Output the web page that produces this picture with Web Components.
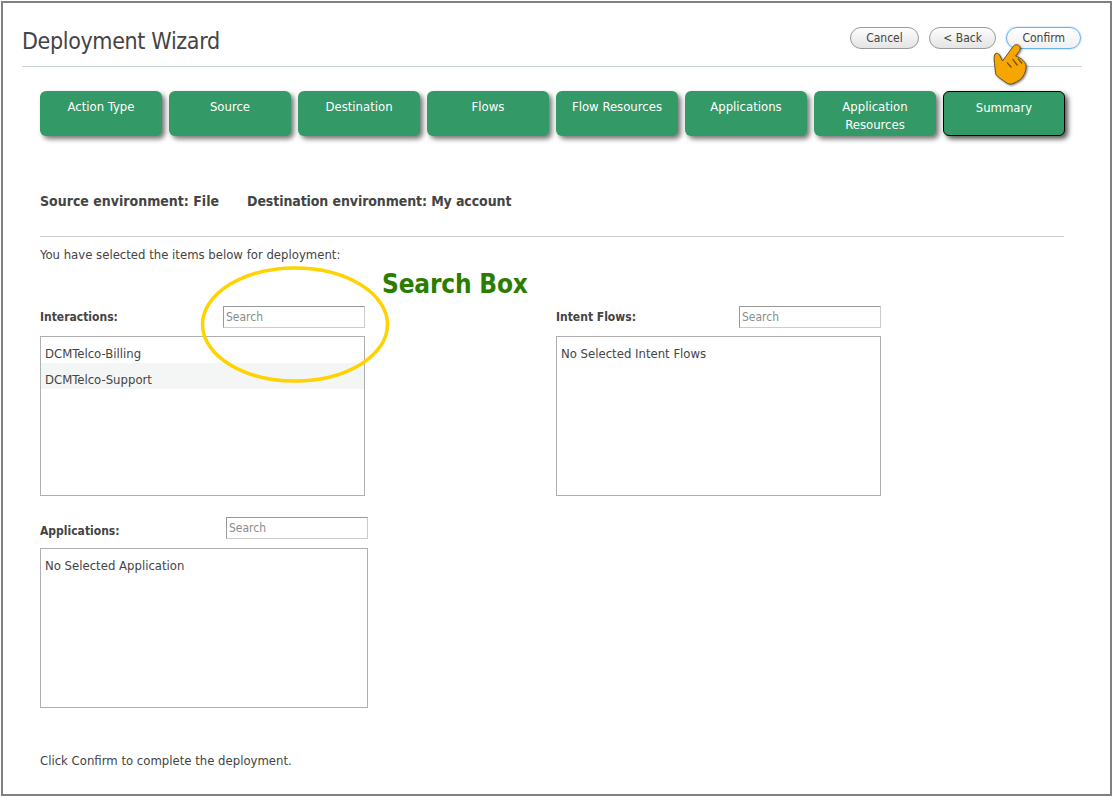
<!DOCTYPE html>
<html>
<head>
<meta charset="utf-8">
<title>Deployment Wizard</title>
<style>
  html, body { margin: 0; padding: 0; background: #fff; }
  body { font-family: "DejaVu Sans Condensed", "DejaVu Sans", sans-serif; }
</style>
</head>
<body>
<wizard-page>
  <wizard-header slot="header" title-text="Deployment Wizard">
    <wizard-button>Cancel</wizard-button>
    <wizard-button style="padding: 0 13.5px">&lt; Back</wizard-button>
    <wizard-button focused>Confirm</wizard-button>
  </wizard-header>
  <wizard-tabs slot="tabs">
    <wizard-tab>Action Type</wizard-tab>
    <wizard-tab>Source</wizard-tab>
    <wizard-tab>Destination</wizard-tab>
    <wizard-tab>Flows</wizard-tab>
    <wizard-tab>Flow Resources</wizard-tab>
    <wizard-tab>Applications</wizard-tab>
    <wizard-tab>Application Resources</wizard-tab>
    <wizard-tab active>Summary</wizard-tab>
  </wizard-tabs>
  <selection-panel slot="interactions" label="Interactions:">
    <list-row>DCMTelco-Billing</list-row>
    <list-row alt>DCMTelco-Support</list-row>
  </selection-panel>
  <selection-panel slot="intents" label="Intent Flows:">
    <list-row>No Selected Intent Flows</list-row>
  </selection-panel>
  <selection-panel slot="applications" label="Applications:" wide>
    <list-row>No Selected Application</list-row>
  </selection-panel>
</wizard-page>

<script>
const pageTemplate = document.createElement('template');
pageTemplate.innerHTML = `
<style>
  * { box-sizing: border-box; }
  :host {
    display: block;
    box-sizing: border-box;
    position: relative;
    width: 1111px;
    height: 795px;
    margin: 1px;
    padding: 0 28px 0 19px;
    border: 2px solid #808080;
    color: #444;
    font-size: 13px;
    overflow: hidden;
  }
  .body { padding: 0 18px; }
  .envs {
    display: flex;
    gap: 28px;
    margin-top: 57px;
    padding-bottom: 26px;
    border-bottom: 1px solid #ccc;
    font-size: 14px;
    font-weight: bold;
    line-height: 17px;
    width: 1024px;
  }
  .envs span + span { letter-spacing: -0.1px; }
  .intro { margin: 10px 0 0; line-height: 16px; }
  .grid {
    display: grid;
    grid-template-columns: 516px 325px;
    margin-top: 43px;
  }
  .apps { margin-top: 21px; }
  .foot { margin: 45px 0 0; line-height: 16px; }
  .callout {
    position: absolute;
    left: 379px;
    top: 263px;
    font-size: 26px;
    font-weight: bold;
    line-height: 36px;
    letter-spacing: -0.2px;
    color: #2b7d00;
    white-space: nowrap;
  }
  .ellipse { position: absolute; left: 197px; top: 262px; }
  .hand {
    position: absolute;
    left: 982px;
    top: 37px;
    filter: drop-shadow(1px 1px 1px rgba(0, 0, 0, .5));
  }
</style>
<slot name="header"></slot>
<slot name="tabs"></slot>
<div class="body">
  <div class="envs"><span>Source environment: File</span><span>Destination environment: My account</span></div>
  <p class="intro">You have selected the items below for deployment:</p>
  <div class="grid">
    <slot name="interactions"></slot>
    <slot name="intents"></slot>
  </div>
  <div class="apps"><slot name="applications"></slot></div>
  <p class="foot">Click Confirm to complete the deployment.</p>
</div>
<svg class="ellipse" width="192" height="122" viewBox="0 0 192 122">
  <ellipse cx="95" cy="59.500" rx="92.500" ry="56.500" fill="none" stroke="#ffd200" stroke-width="3.500"/>
</svg>
<div class="callout">Search Box</div>
<svg class="hand" width="46" height="52" viewBox="985 40 46 52">
  <path d="M1013.500 46c2-2.200 5.500-1.500 6.500 1 .5 1.500 0 3-1 4.500l-3.500 4.500c3 .8 5.500 2.500 7.500 4.500 2.500 2.500 3.500 5 3 7.500-.5 4-2 7.500-4.500 10.500-3 2.500-6.500 4.500-10 5.500-2 .3-4-.3-5.500-1.500-3-2.500-7.500-4.500-10-8-.8-3-1-7-1.500-11-.3-3-.8-7 .5-9.500 1.500-1.500 3.500-.5 4.500 1l3 6z" fill="#f7a600" stroke="#5f5230" stroke-width="1"/>
  <path d="M1007 62.500l4.500 5M1012.500 59l5 6.500M1018 58.500l4 5" fill="none" stroke="#7a5200" stroke-width="1.300"/>
</svg>
`;
class WizardPage extends HTMLElement {
  constructor() {
    super();
    this.attachShadow({ mode: 'open' }).appendChild(pageTemplate.content.cloneNode(true));
  }
}
customElements.define('wizard-page', WizardPage);

const headerTemplate = document.createElement('template');
headerTemplate.innerHTML = `
<style>
  * { box-sizing: border-box; }
  :host {
    display: flex;
    align-items: flex-start;
    justify-content: space-between;
    height: 64px;
    padding-top: 24px;
    border-bottom: 1px solid #ccd3d3;
    box-sizing: border-box;
  }
  h1 {
    margin: -1px 0 0;
    font-size: 23px;
    font-weight: normal;
    line-height: 30px;
    letter-spacing: -0.35px;
    color: #444;
  }
  .actions { display: flex; gap: 10px; padding-right: 1px; }
</style>
<h1></h1>
<div class="actions"><slot></slot></div>
`;
class WizardHeader extends HTMLElement {
  constructor() {
    super();
    this.attachShadow({ mode: 'open' }).appendChild(headerTemplate.content.cloneNode(true));
    this.shadowRoot.querySelector('h1').textContent = this.getAttribute('title-text');
  }
}
customElements.define('wizard-header', WizardHeader);

const buttonTemplate = document.createElement('template');
buttonTemplate.innerHTML = `
<style>
  :host {
    display: block;
    box-sizing: border-box;
    height: 22px;
    padding: 0 15px;
    border: 1px solid #999;
    border-radius: 11px;
    background: linear-gradient(#fdfdfd, #e4e4e4);
    font-size: 12px;
    line-height: 20px;
    color: #444;
    white-space: nowrap;
  }
  :host([focused]) {
    border-color: #6aaef0;
    background: linear-gradient(#fff, #f0f0f0);
    box-shadow: 0 0 2px #8cc4f8;
  }
</style>
<slot></slot>
`;
class WizardButton extends HTMLElement {
  constructor() {
    super();
    this.attachShadow({ mode: 'open' }).appendChild(buttonTemplate.content.cloneNode(true));
  }
}
customElements.define('wizard-button', WizardButton);

const tabsTemplate = document.createElement('template');
tabsTemplate.innerHTML = `
<style>
  :host {
    display: grid;
    grid-template-columns: repeat(8, 122px);
    gap: 7px;
    margin: 24px 0 0 18px;
  }
</style>
<slot></slot>
`;
class WizardTabs extends HTMLElement {
  constructor() {
    super();
    this.attachShadow({ mode: 'open' }).appendChild(tabsTemplate.content.cloneNode(true));
  }
}
customElements.define('wizard-tabs', WizardTabs);

const tabTemplate = document.createElement('template');
tabTemplate.innerHTML = `
<style>
  :host {
    display: block;
    box-sizing: border-box;
    height: 45px;
    padding: 7px 8px 0;
    border-radius: 6px;
    background: #339966;
    box-shadow: 3px 3px 5px #777;
    color: #fff;
    font-size: 13px;
    line-height: 18px;
    text-align: center;
  }
  :host([active]) {
    border: 1px solid #000;
    box-shadow: 3px 3px 5px #555;
  }
</style>
<slot></slot>
`;
class WizardTab extends HTMLElement {
  constructor() {
    super();
    this.attachShadow({ mode: 'open' }).appendChild(tabTemplate.content.cloneNode(true));
  }
}
customElements.define('wizard-tab', WizardTab);

const panelTemplate = document.createElement('template');
panelTemplate.innerHTML = `
<style>
  * { box-sizing: border-box; }
  :host { display: block; width: 325px; }
  :host([wide]) { width: 328px; }
  .top {
    display: flex;
    align-items: center;
    justify-content: space-between;
    height: 22px;
    margin-bottom: 8px;
  }
  :host([wide]) .top { margin-bottom: 9px; }
  :host([wide]) .label { padding-top: 6px; }
  .label { font-size: 12px; font-weight: bold; }
  .search {
    width: 142px;
    height: 22px;
    padding: 0 2px;
    border: 1px solid #ccc;
    border-top-color: #999;
    border-left-color: #999;
    background: #fff;
    font-family: inherit;
    font-size: 12px;
    color: #444;
    outline: none;
  }
  .search::placeholder { color: #8c8c8c; opacity: 1; }
  .list {
    height: 160px;
    border: 1px solid #b0b0b0;
    background: #fff;
    overflow: hidden;
  }
</style>
<div class="top">
  <span class="label"></span>
  <input class="search" type="text" placeholder="Search">
</div>
<div class="list"><slot></slot></div>
`;
class SelectionPanel extends HTMLElement {
  constructor() {
    super();
    this.attachShadow({ mode: 'open' }).appendChild(panelTemplate.content.cloneNode(true));
    this.shadowRoot.querySelector('.label').textContent = this.getAttribute('label');
  }
}
customElements.define('selection-panel', SelectionPanel);

const rowTemplate = document.createElement('template');
rowTemplate.innerHTML = `
<style>
  :host {
    display: block;
    box-sizing: border-box;
    height: 26px;
    padding: 4px 4px 0;
    font-size: 13px;
    line-height: 26px;
    color: #444;
  }
  :host([alt]) { background: #f4f6f6; }
</style>
<slot></slot>
`;
class ListRow extends HTMLElement {
  constructor() {
    super();
    this.attachShadow({ mode: 'open' }).appendChild(rowTemplate.content.cloneNode(true));
  }
}
customElements.define('list-row', ListRow);
</script>
</body>
</html>
